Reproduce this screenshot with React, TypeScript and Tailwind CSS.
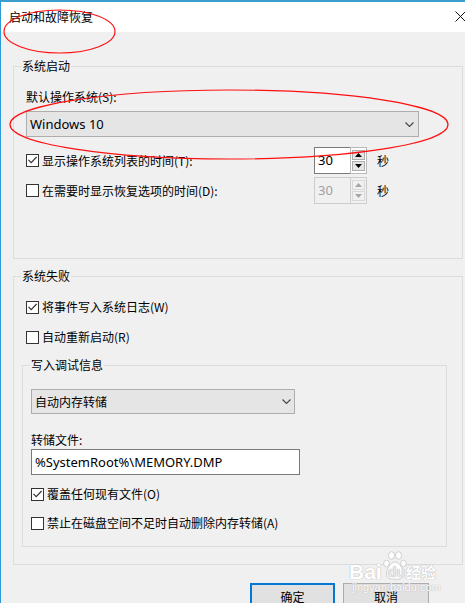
import React from "react";

function Check({ checked }: { checked?: boolean }) {
  return (
    <div className="w-[13px] h-[13px] shrink-0 border border-[#333333] bg-white flex items-center justify-center">
      {checked && (
        <svg width="11" height="11" viewBox="0 0 11 11">
          <path d="M1.5 4.8 L4.2 7.6 L9.6 2" stroke="#333333" strokeWidth="1.2" fill="none" />
        </svg>
      )}
    </div>
  );
}

function CheckRow({ checked, label }: { checked?: boolean; label: string }) {
  return (
    <div className="flex items-center h-[16px]">
      <Check checked={checked} />
      <span className="ml-[3px] whitespace-nowrap">{label}</span>
    </div>
  );
}

function Tri({ up, color }: { up?: boolean; color: string }) {
  return (
    <svg width="7" height="4" viewBox="0 0 7 4">
      {up ? <path d="M0 4 L3.5 0 L7 4 Z" fill={color} /> : <path d="M0 0 L3.5 4 L7 0 Z" fill={color} />}
    </svg>
  );
}

function Spin({ disabled }: { disabled?: boolean }) {
  return (
    <div className="flex h-[27px] w-[53px] shrink-0">
      <div
        className={
          disabled
            ? "w-[36px] h-full border border-r-0 border-[#cccccc] bg-[#f0f0f0] text-[#a0a0a0] flex items-center pl-[3px] pb-[2px] font-['Noto_Sans',sans-serif] text-[13px]"
            : "w-[36px] h-full border border-r-0 border-[#7a7a7a] bg-white text-black flex items-center pl-[3px] pb-[2px] font-['Noto_Sans',sans-serif] text-[13px]"
        }
      >
        30
      </div>
      <div
        className={
          disabled
            ? "flex-1 h-full border border-[#cccccc] bg-[#f0f0f0] flex flex-col py-[2px] px-[1px] gap-[1px]"
            : "flex-1 h-full border border-[#b9b9b9] bg-white flex flex-col py-[2px] px-[1px] gap-[1px]"
        }
      >
        <div
          className={
            disabled
              ? "flex-1 border border-[#d9d9d9] bg-[#f0f0f0] flex items-center justify-center"
              : "flex-1 border border-[#adadad] bg-[#e5e5e5] flex items-center justify-center"
          }
        >
          <Tri up color={disabled ? "#a6a6a6" : "#000000"} />
        </div>
        <div
          className={
            disabled
              ? "flex-1 border border-[#d9d9d9] bg-[#f0f0f0] flex items-center justify-center"
              : "flex-1 border border-[#adadad] bg-[#e5e5e5] flex items-center justify-center"
          }
        >
          <Tri color={disabled ? "#a6a6a6" : "#000000"} />
        </div>
      </div>
    </div>
  );
}

function Chevron() {
  return (
    <svg width="9" height="5" viewBox="0 0 9 5">
      <path d="M0.5 0.5 L4.5 4.5 L8.5 0.5" stroke="#444444" strokeWidth="1.1" fill="none" />
    </svg>
  );
}

export default function App() {
  return (
    <div className="relative w-[465px] h-[603px] overflow-hidden bg-[#f0f0f0] border-l border-l-[#2b9ad6] border-t-2 border-t-[#3a9fcf] text-[12px] leading-[16px] text-black font-['Noto_Sans_CJK_SC','Noto_Sans',sans-serif]">
      {/* title bar */}
      <div className="h-[30px] bg-white flex items-center justify-between pl-[8px]">
        <span className="mb-[1px]">启动和故障恢复</span>
        <svg className="-mr-[1px] mb-[2px]" width="11" height="11" viewBox="0 0 11 11">
          <path d="M0.5 0.5 L10.5 10.5 M10.5 0.5 L0.5 10.5" stroke="#111111" strokeWidth="1" />
        </svg>
      </div>

      {/* 系统启动 */}
      <div className="ml-[12px] mr-[2px] mt-[34px] h-[193px] border border-[#dcdcdc]">
        <div className="-mt-[9px] ml-[7px] w-fit px-[1px] bg-[#f0f0f0]">系统启动</div>
        <div className="ml-[12px] mt-[15px]">默认操作系统(S):</div>
        <div className="ml-[12px] mt-[6px] h-[26px] w-[393px] bg-[#e5e5e5] border border-[#adadad] flex items-center justify-between pl-[3px] pr-[4px]">
          <span className="font-['Noto_Sans',sans-serif] text-[13px] mb-[1px]">Windows 10</span>
          <Chevron />
        </div>
        <div className="ml-[12px] mt-[10px] h-[27px] flex items-center">
          <div className="w-[288px] flex items-center">
            <CheckRow checked label="显示操作系统列表的时间(T):" />
          </div>
          <Spin />
          <span className="ml-[10px]">秒</span>
        </div>
        <div className="ml-[12px] mt-[3px] h-[27px] flex items-center">
          <div className="w-[288px] flex items-center">
            <CheckRow label="在需要时显示恢复选项的时间(D):" />
          </div>
          <Spin disabled />
          <span className="ml-[10px]">秒</span>
        </div>
      </div>

      {/* 系统失败 */}
      <div className="ml-[12px] mr-[2px] mt-[17px] h-[289px] border border-[#dcdcdc]">
        <div className="-mt-[9px] ml-[7px] w-fit px-[1px] bg-[#f0f0f0]">系统失败</div>
        <div className="ml-[12px] mt-[15px]">
          <CheckRow checked label="将事件写入系统日志(W)" />
        </div>
        <div className="ml-[12px] mt-[14px]">
          <CheckRow label="自动重新启动(R)" />
        </div>

        {/* 写入调试信息 */}
        <div className="ml-[8px] mt-[20px] w-[425px] h-[182px] border border-[#dcdcdc]">
          <div className="-mt-[9px] ml-[7px] w-fit px-[1px] bg-[#f0f0f0]">写入调试信息</div>
          <div className="ml-[8px] mt-[16px] h-[25px] w-[264px] bg-[#e5e5e5] border border-[#adadad] flex items-center justify-between pl-[3px] pr-[3px]">
            <span>自动内存转储</span>
            <Chevron />
          </div>
          <div className="ml-[8px] mt-[18px]">转储文件:</div>
          <div className="ml-[8px] mt-[1px] h-[26px] w-[269px] bg-white border border-[#7a7a7a] flex items-center pl-[3px]">
            <span className="font-['Noto_Sans',sans-serif] text-[13px] mb-[1px]">%SystemRoot%\MEMORY.DMP</span>
          </div>
          <div className="ml-[8px] mt-[11px]">
            <CheckRow checked label="覆盖任何现有文件(O)" />
          </div>
          <div className="ml-[8px] mt-[13px]">
            <CheckRow label="禁止在磁盘空间不足时自动删除内存转储(A)" />
          </div>
        </div>
      </div>

      {/* buttons */}
      <div className="ml-[249px] mt-[18px] flex gap-[8px]">
        <div className="w-[85px] h-[28px] border-2 border-[#0078d7] bg-[#e1e1e1] flex items-center justify-center">确定</div>
        <div className="w-[86px] h-[28px] border border-[#adadad] bg-[#e1e1e1] flex items-center justify-center">取消</div>
      </div>

      {/* red annotation ellipses */}
      <svg className="absolute left-0 top-0 pointer-events-none" width="465" height="603" viewBox="0 0 465 603">
        <ellipse cx="58.5" cy="29.5" rx="55.5" ry="21.5" stroke="#ff1010" strokeWidth="1.2" fill="none" />
        <ellipse cx="228" cy="122.5" rx="219" ry="34.5" stroke="#ff1010" strokeWidth="1.2" fill="none" />
      </svg>

      {/* Baidu watermark */}
      <div className="absolute left-[346px] top-[547px] w-[95px] h-[45px] pointer-events-none text-white [text-shadow:0_0_1px_#b8b8b8,0_0_1px_#b8b8b8]">
        <span className="absolute left-[2px] top-[12px] font-['Liberation_Sans',sans-serif] font-bold text-[21px] leading-[22px]">Bai</span>
        <svg className="absolute left-[36px] top-[2px]" width="24" height="30" viewBox="0 0 24 30">
          <g fill="#ffffff" stroke="#c4c4c4" strokeWidth="0.8">
            <ellipse cx="8.5" cy="4.5" rx="3" ry="3.8" />
            <ellipse cx="15.5" cy="4.5" rx="3" ry="3.8" />
            <ellipse cx="3.5" cy="12.5" rx="2.8" ry="3.3" />
            <ellipse cx="20.5" cy="12.5" rx="2.8" ry="3.3" />
            <path d="M12 11 C8 11 4 17 3.5 22 C3 27 7 29 12 28 C17 29 21 27 20.5 22 C20 17 16 11 12 11 Z" />
          </g>
        </svg>
        <span className="absolute left-[41px] top-[15px] font-['Liberation_Sans',sans-serif] font-bold text-[14px] leading-[16px] text-[#e8e8e8]">du</span>
        <span className="absolute left-[59px] top-[13px] font-['Noto_Sans_CJK_SC',sans-serif] font-bold text-[15px] leading-[20px]">经验</span>
        <span className="absolute left-[5px] top-[32px] font-['Liberation_Sans',sans-serif] text-[11px] leading-[12px] whitespace-nowrap">jingyan.baidu.com</span>
      </div>
    </div>
  );
}
